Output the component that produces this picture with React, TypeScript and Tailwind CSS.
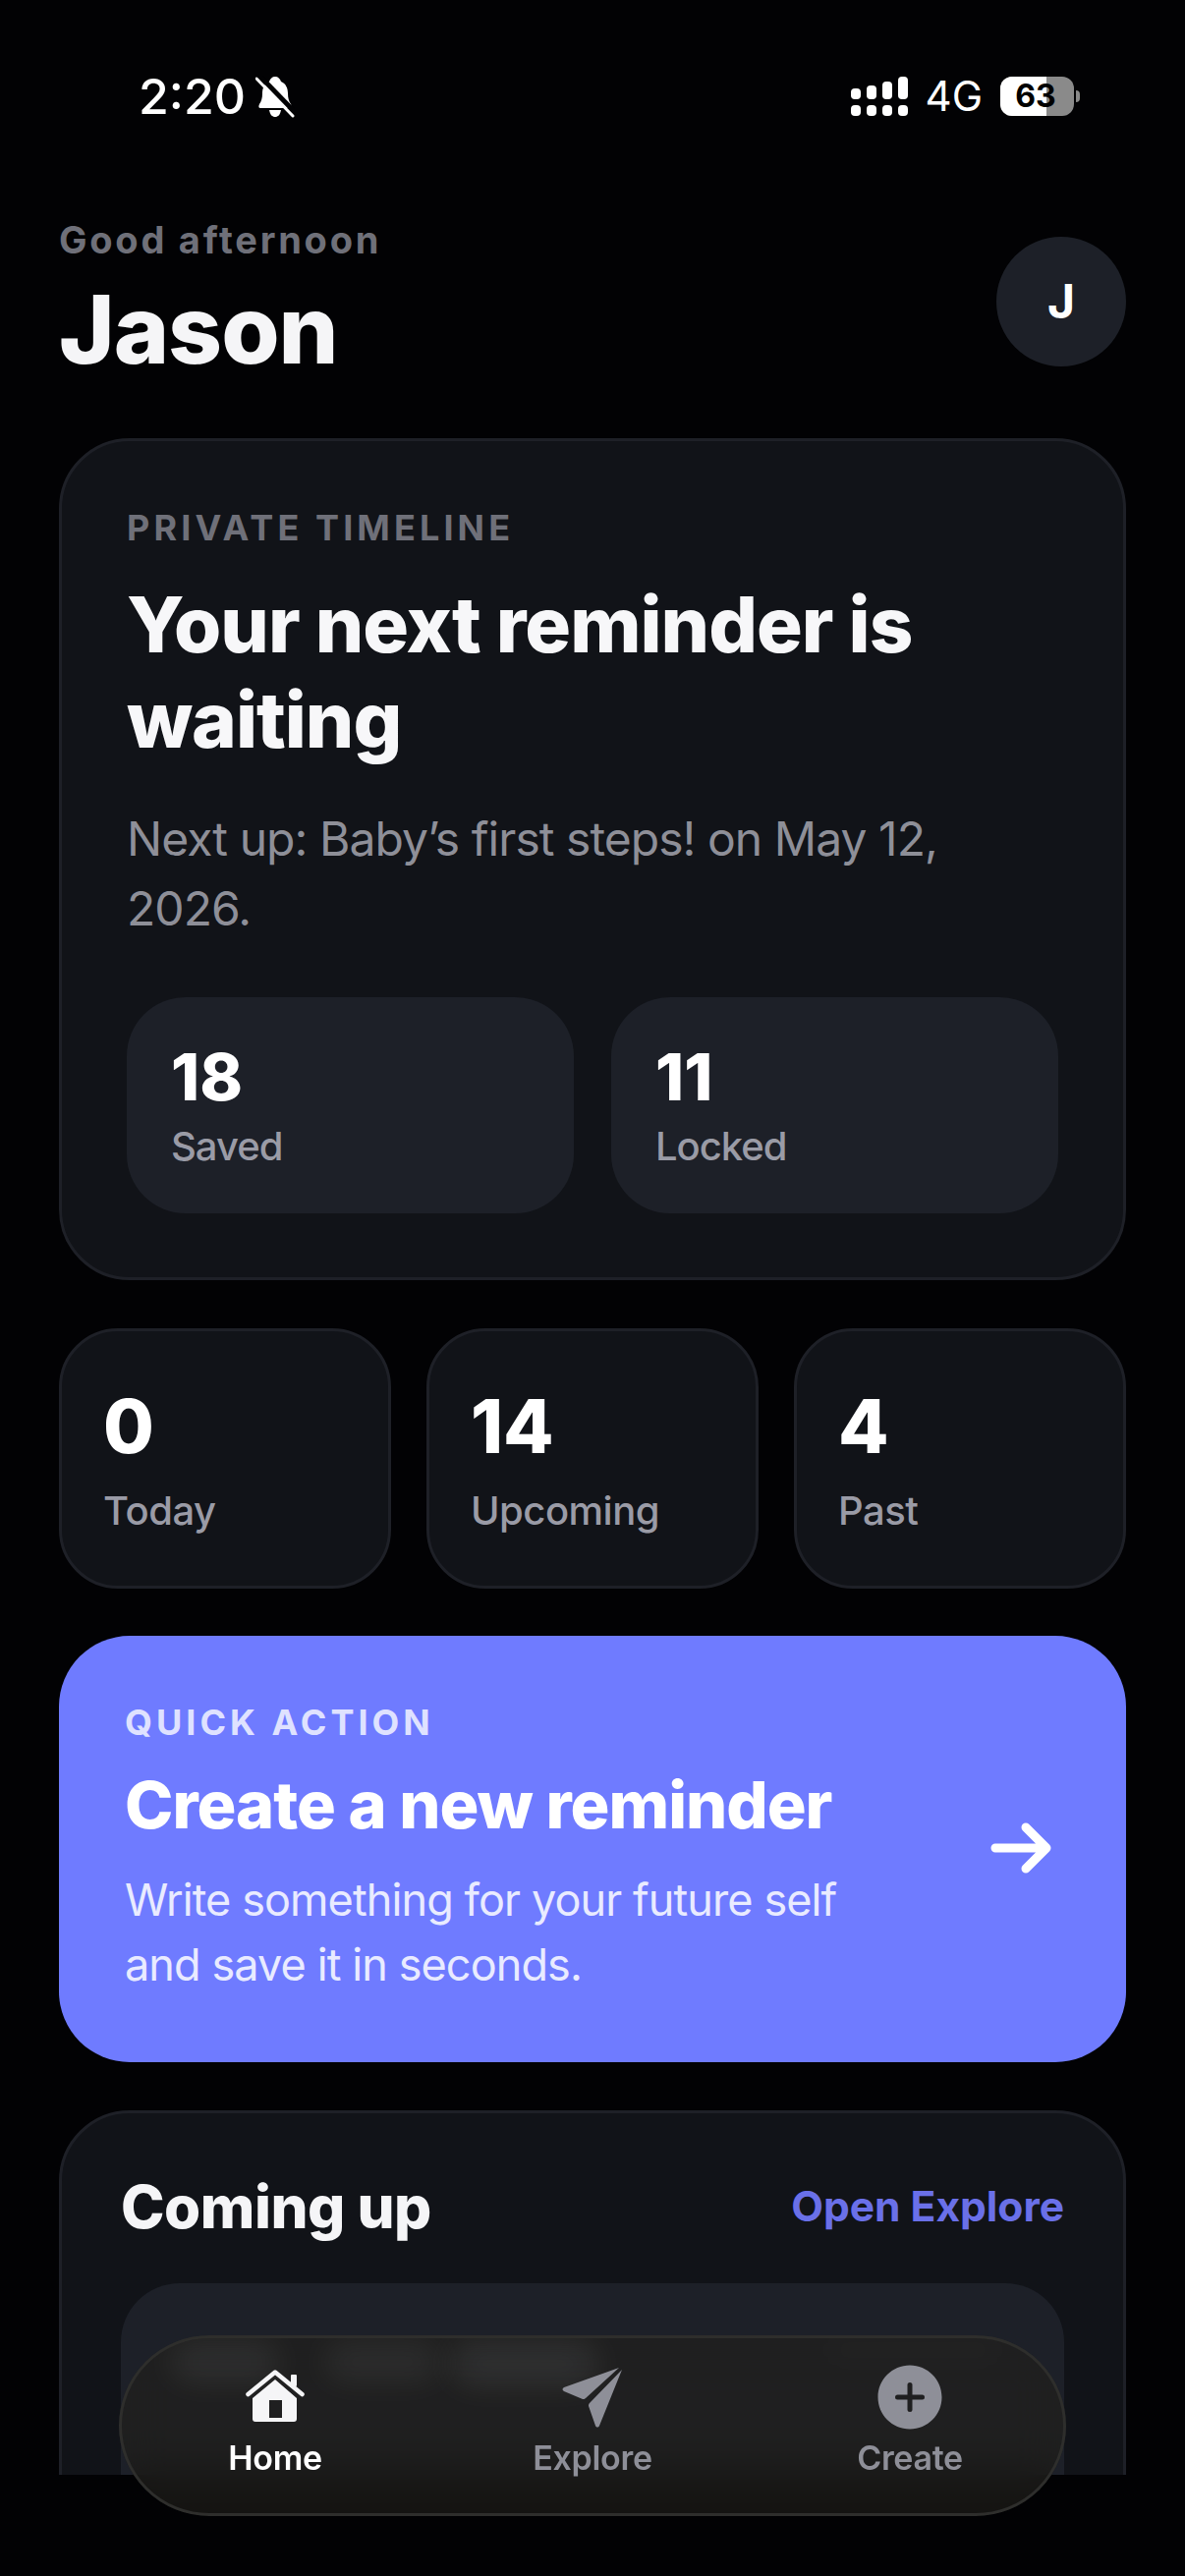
import { IoAddCircle } from "react-icons/io5";

const font = { fontFamily: "Inter, sans-serif" };

const BellOff = () => (
  <svg viewBox="0 0 40 43" className="h-[43px] w-[40px]" fill="white">
    <path d="M20 1c3 0 5 2 6 5 5 2 7 7 7 12 0 5 1 8 3 11 1 2 1 4-1 4H5c-2 0-2-2-1-4 2-3 3-6 3-11 0-5 2-10 7-12 1-3 3-5 6-5z" />
    <path d="M14 35h12c-1 5-3 7-6 7s-5-2-6-7z" />
    <path d="M4 0 40 37" stroke="#020204" strokeWidth="5" />
    <path d="M1 3 38 41" stroke="white" strokeWidth="3" strokeLinecap="round" />
  </svg>
);

const Signal = () => (
  <div className="flex items-end gap-[6px]">
    {[11, 14, 18, 23].map((h) => (
      <div key={h} className="flex w-[10px] flex-col justify-end gap-[6px]">
        <div className="w-full rounded-[4px] bg-white" style={{ height: h }} />
        <div className="h-[11px] w-full rounded-[4px] bg-white" />
      </div>
    ))}
  </div>
);

const Battery = () => (
  <div className="flex items-center gap-[2px]">
    <div className="relative flex h-[40px] w-[75px] items-center justify-center overflow-hidden rounded-[12px] bg-[#8a8a8a]">
      <div className="absolute inset-y-0 left-0 w-[47px] bg-white" />
      <span className="relative pr-[3px] text-[32px] leading-none font-bold text-black">63</span>
    </div>
    <div className="h-[12px] w-[4px] rounded-r-full bg-[#8a8a8a]" />
  </div>
);

const StatusBar = () => (
  <div className="flex h-[196px] items-center justify-between pr-[107px] pl-[141px]">
    <div className="flex items-center gap-[10px]">
      <span className="text-[50px] leading-none font-medium text-white">2:20</span>
      <BellOff />
    </div>
    <div className="flex items-center gap-[18px]">
      <Signal />
      <span className="text-[42px] leading-none font-normal text-white">4G</span>
      <Battery />
    </div>
  </div>
);

const Tile = ({ value, label }: { value: string; label: string }) => (
  <div className="flex h-[220px] flex-1 flex-col rounded-[60px] bg-[#1d2028] pt-[48px] pl-[45px]">
    <div className="text-[66px] leading-[66px] font-extrabold text-white">{value}</div>
    <div className="mt-[14px] text-[40px] leading-[48px] font-medium tracking-[-1px] text-[#9a9ba6]">{label}</div>
  </div>
);

const Stat = ({ value, label }: { value: string; label: string }) => (
  <div className="flex h-[265px] flex-1 flex-col rounded-[60px] border-[3px] border-[#1e2027] bg-[#111318] pt-[61px] pl-[42px]">
    <div className="text-[75px] leading-[72px] font-extrabold text-white">{value}</div>
    <div className="mt-[26px] text-[40px] leading-[48px] font-medium tracking-[-0.5px] text-[#9a9ba6]">{label}</div>
  </div>
);

const HomeIcon = () => (
  <svg viewBox="0 0 60 56" className="h-[56px] w-[60px]" fill="#f5f5f7">
    <path d="M2.5 25 30 2.5 57.5 25" fill="none" stroke="#f5f5f7" strokeWidth="4.5" strokeLinecap="round" strokeLinejoin="round" />
    <rect x="46" y="5" width="6" height="12" rx="1" />
    <path fillRule="evenodd" d="M30 10 52 29v21c0 2-1 3-3 3H10c-2 0-3-1-3-3V29L30 10zM24 31v18h13V31H24z" />
  </svg>
);

const PlaneIcon = () => (
  <svg viewBox="0 0 62 62" className="h-[62px] w-[62px]" fill="#8e8f98">
    <path d="M58 1 2 21c-2 1-2 3 0 4l19 8c1 0 2 0 3-1L58 1z" />
    <path d="M61 3 28 37c-1 1-1 2-1 3l7 20c1 2 3 2 4 0L61 3z" />
  </svg>
);

const NavItem = ({ icon, label, active }: { icon: React.ReactNode; label: string; active?: boolean }) => (
  <div className="relative flex w-[200px] flex-col items-center">
    <div className="flex h-[68px] items-center justify-center">{icon}</div>
    <div className={`mt-[8px] text-[34px] leading-[40px] font-semibold tracking-[-0.3px] ${active ? "text-white" : "text-[#8e8f98]"}`}>{label}</div>
  </div>
);

export default function App() {
  return (
    <div style={font} className="relative h-[2622px] w-[1206px] overflow-hidden bg-[#020204]">
      <div className="h-[2519px] overflow-hidden">
        <StatusBar />

        <div className="px-[60px]">
          <div className="flex items-center justify-between pt-[24px]">
            <div>
              <div className="text-[38px] leading-[48px] font-bold tracking-[2.75px] text-[#6f7079]">Good afternoon</div>
              <div className="mt-[9px] text-[96px] leading-[116px] font-extrabold tracking-[-1px] text-[#f5f5f7]">Jason</div>
            </div>
            <div className="flex h-[132px] w-[132px] items-center justify-center rounded-full bg-[#1d2028] text-[48px] font-bold text-white">J</div>
          </div>

          <div className="mt-[53px] h-[857px] rounded-[72px] border-[3px] border-[#1e2027] bg-[#111318] px-[66px] pt-[67px]">
            <div className="text-[36px] leading-[42px] font-bold tracking-[4.1px] text-[#6f7079]">PRIVATE TIMELINE</div>
            <h1 className="mt-[29px] text-[78px] leading-[97px] font-extrabold tracking-[-1px] text-[#f7f7f9]">Your next reminder is waiting</h1>
            <p className="mt-[37px] w-[860px] text-[48px] leading-[71px] tracking-[-0.95px] text-[#8e8f98]">Next up: Baby’s first steps! on May 12, 2026.</p>
            <div className="mt-[55px] flex gap-[38px]">
              <Tile value="18" label="Saved" />
              <Tile value="11" label="Locked" />
            </div>
          </div>

          <div className="mt-[49px] flex gap-[36px]">
            <Stat value="0" label="Today" />
            <Stat value="14" label="Upcoming" />
            <Stat value="4" label="Past" />
          </div>

          <div className="mt-[48px] flex h-[434px] items-center justify-between rounded-[72px] bg-[#6f7bff] pr-[76px] pl-[67px]">
            <div>
              <div className="text-[36px] leading-[42px] font-bold tracking-[4px] text-[#dfe2ff]">QUICK ACTION</div>
              <div className="mt-[25px] text-[66.5px] leading-[76px] font-extrabold tracking-[-1px] text-white">Create a new reminder</div>
              <p className="mt-[26px] w-[800px] text-[45px] leading-[66px] tracking-[-0.9px] text-[#e9ebff]">Write something for your future self and save it in seconds.</p>
            </div>
            <svg viewBox="0 0 62 52" className="mb-[2px] h-[52px] w-[62px]" fill="none" stroke="white" strokeWidth="9" strokeLinecap="round" strokeLinejoin="round">
              <path d="M5 26h52M36 5l21 21-21 21" />
            </svg>
          </div>

          <div className="mt-[49px] h-[700px] rounded-[72px] border-[3px] border-[#1e2027] bg-[#111318] px-[60px] pt-[57px]">
            <div className="flex items-center justify-between">
              <div className="text-[60px] leading-[76px] font-extrabold tracking-[-0.5px] text-[#f5f5f7]">Coming up</div>
              <div className="text-[42.5px] leading-[50px] font-bold text-[#6a70e8]">Open Explore</div>
            </div>
            <div className="mt-[40px] h-[400px] rounded-[60px] bg-[#1d2028]" />
          </div>
        </div>
      </div>

      {/* floating tab bar */}
      <div className="absolute top-[2377px] left-[121px] flex h-[184px] w-[964px] items-start justify-between rounded-[92px] border-[3px] border-[#2e2e2c] bg-[#221f1a]/60 px-[56px] pt-[26px] backdrop-blur-xl">
        <div className="absolute inset-0 overflow-hidden rounded-[89px]">
          <div className="absolute top-[4px] left-[50px] h-[40px] w-[110px] rounded-full bg-white/[0.07] blur-[16px]" />
          <div className="absolute top-[4px] left-[205px] h-[40px] w-[120px] rounded-full bg-white/[0.06] blur-[16px]" />
          <div className="absolute top-[4px] left-[335px] h-[44px] w-[150px] rounded-full bg-white/[0.08] blur-[16px]" />
          <div className="absolute top-[0px] left-[710px] h-[24px] w-[190px] rounded-full bg-white/[0.02] blur-[16px]" />
        </div>
        <NavItem active label="Home" icon={<HomeIcon />} />
        <NavItem label="Explore" icon={<PlaneIcon />} />
        <NavItem label="Create" icon={<IoAddCircle size={80} color="#8e8f98" />} />
      </div>
    </div>
  );
}
